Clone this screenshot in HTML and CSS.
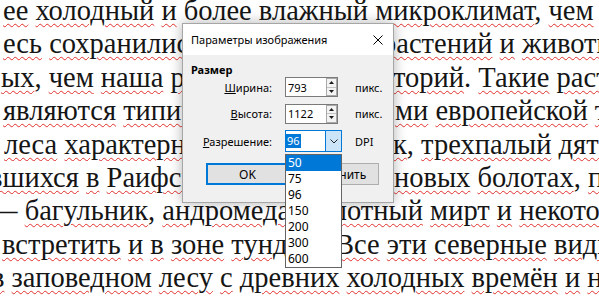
FILE: index.html
```html
<!DOCTYPE html>
<html lang="ru">
  <head>
    <meta charset="UTF-8" />
    <title>Параметры изображения</title>
    <link rel="stylesheet" href="styles.css">
  </head>
  <body>
    <main class="doc">
      <div class="ln l1"><u>ее</u> <u>холодный</u> <u>и</u> <u>более</u> <u>влажный</u> <u>микроклимат</u>, <u>чем</u></div>
      <div class="ln split l2"><span class="lft"><u>есь</u> <u>сохранились</u> <u>многие</u> <u>виды</u></span><span class="rgt"><u>растений</u> <u>и</u> <u>животных</u></span></div>
      <div class="ln split l3"><span class="lft"><u>ых</u>, <u>чем</u> <u>наша</u> <u>республика</u></span><span class="rgt"><u>торий</u>. <u>Такие</u> <u>растения</u></span></div>
      <div class="ln split l4"><span class="lft"><u>являются</u> <u>типичными</u></span><span class="rgt"><u>ми</u> <u>европейской</u> <u>тайги</u></span></div>
      <div class="ln split l5"><span class="lft"><u>леса</u> <u>характерны</u></span><span class="rgt"><u>к</u>, <u>трехпалый</u> <u>дятел</u></span></div>
      <div class="ln split l6"><span class="lft"><u>вшихся</u> <u>в</u> <u>Раифском</u></span><span class="rgt"><u>новых</u> <u>болотах</u>, <u>по</u></span></div>
      <div class="ln l7">— <u>багульник</u>, <u>андромеда</u>, <u>болотный</u> <u>мирт</u> <u>и</u> <u>некоторые</u></div>
      <div class="ln l8"><u>встретить</u> <u>и</u> <u>в</u> <u>зоне</u> <u>тундры</u>. <u>Все</u> <u>эти</u> <u>северные</u> <u>виды</u></div>
      <div class="ln l9"><u>в</u> <u>заповедном</u> <u>лесу</u> <u>с</u> <u>древних</u> <u>холодных</u> <u>времён</u> <u>и</u> <u>не</u></div>
    </main>

    <div class="dialog">
      <div class="titlebar">
        <span class="title">Параметры изображения</span>
        <svg class="close" width="10" height="10" viewBox="0 0 10 10">
          <path d="M0.5 0.5L9.5 9.5M9.5 0.5L0.5 9.5" stroke="#000" stroke-width="1" fill="none" />
        </svg>
      </div>
      <div class="body">
        <div class="group">Размер</div>
        <div class="grid">
          <label class="lbl"><span class="key">Ш</span>ирина:</label>
          <div class="spin">
            <span class="val">793</span>
            <div class="arrows">
              <span class="half"><svg width="5" height="3" viewBox="0 0 5 3"><path d="M0 3H5L2.5 0Z" /></svg></span>
              <span class="half"><svg width="5" height="3" viewBox="0 0 5 3"><path d="M0 0H5L2.5 3Z" /></svg></span>
            </div>
          </div>
          <span class="unit">пикс.</span>

          <label class="lbl"><span class="key">В</span>ысота:</label>
          <div class="spin">
            <span class="val">1122</span>
            <div class="arrows">
              <span class="half"><svg width="5" height="3" viewBox="0 0 5 3"><path d="M0 3H5L2.5 0Z" /></svg></span>
              <span class="half"><svg width="5" height="3" viewBox="0 0 5 3"><path d="M0 0H5L2.5 3Z" /></svg></span>
            </div>
          </div>
          <span class="unit">пикс.</span>

          <label class="lbl"><span class="key">Р</span>азрешение:</label>
          <div class="combo">
            <span class="sel">96</span>
            <span class="drop">
              <svg width="8" height="5" viewBox="0 0 8 5"><path d="M0.5 0.5L4 4L7.5 0.5" stroke="#222" stroke-width="1" fill="none" /></svg>
            </span>
            <ul class="list">
              <li class="hot">50</li>
              <li>75</li>
              <li>96</li>
              <li>150</li>
              <li>200</li>
              <li>300</li>
              <li>600</li>
            </ul>
          </div>
          <span class="unit">DPI</span>
        </div>
        <div class="buttons">
          <button class="btn default">OK</button>
          <button class="btn">Отменить</button>
        </div>
      </div>
    </div>
  </body>
</html>
```

FILE: styles.css
```css
* {
  box-sizing: border-box;
  margin: 0;
  padding: 0;
}

html,
body {
  width: 100%;
  height: 100%;
  overflow: hidden;
  background: #fff;
}

/* Document text behind the dialog */
.doc {
  font-family: "Liberation Serif", "Times New Roman", serif;
  font-size: 28.5px;
  line-height: 33.4px;
  color: #151515;
  margin-top: -6px;
}

.ln {
  white-space: nowrap;
}

/* spell check marks */
.ln u {
  text-decoration: underline wavy #e0302c;
  text-decoration-thickness: 1px;
  text-underline-offset: 3px;
}

.split {
  display: flex;
}

.split .lft {
  flex: 0 0 393px;
  overflow: hidden;
}

.l1 { text-indent: 3px; }
.l2 .lft { text-indent: 3px; }
.l2 .rgt { margin-left: -11px; }
.l3 .lft { text-indent: 1px; }
.l4 .lft { text-indent: 3px; }
.l4 .rgt { margin-left: 2px; }
.l5 .lft { text-indent: 4px; }
.l6 .lft { text-indent: -11px; }
.l6 .rgt { margin-left: 1px; }
.l7 { text-indent: -11px; }
.l8 { text-indent: 2px; }
.l9 { text-indent: -9px; }

/* Dialog */
.dialog {
  position: absolute;
  left: 182px;
  top: 23px;
  width: 212px;
  border: 1px solid #a6a6a6;
  background: #f0f0f0;
  box-shadow: 0 0 12px rgba(0, 0, 0, 0.3);
  font-family: "Noto Sans", "Open Sans", sans-serif;
  font-size: 11px;
  color: #000;
}

.titlebar {
  height: 31px;
  background: #fff;
  display: flex;
  align-items: center;
  justify-content: space-between;
  padding: 0 10px 0 8px;
}

.close {
  display: block;
}

.body {
  padding: 7px 14px 17px 8px;
}

.group {
  font-weight: bold;
  line-height: 15px;
}

.grid {
  display: grid;
  grid-template-columns: 81px 57px auto;
  grid-template-rows: 20px 21px 22px;
  column-gap: 13px;
  row-gap: 6px;
  align-items: center;
}

.lbl {
  text-align: right;
  white-space: nowrap;
}

.key {
  text-decoration: underline;
}

.spin {
  width: 53px;
  height: 20px;
  border: 1px solid #7a7a7a;
  background: #fff;
  display: flex;
  align-items: center;
  justify-content: space-between;
  padding-left: 2px;
}

.arrows {
  width: 11px;
  height: 18px;
  border: 1px solid #a9a9a9;
  background: #f3f3f3;
  display: flex;
  flex-direction: column;
}

.half {
  flex: 1;
  display: flex;
  align-items: center;
  justify-content: center;
}

.half + .half {
  border-top: 1px solid #c4c4c4;
}

.half svg {
  display: block;
  fill: #1a1a1a;
}

.combo {
  position: relative;
  width: 57px;
  height: 22px;
  border: 1px solid #0078d7;
  background: #fff;
  display: flex;
  align-items: center;
}

.sel {
  background: #0078d7;
  color: #fff;
  line-height: 14px;
  padding: 0 1px;
}

.drop {
  margin-left: auto;
  width: 16px;
  height: 100%;
  background: #cce4f7;
  border-left: 1px solid #0078d7;
  display: flex;
  align-items: center;
  justify-content: center;
}

.drop svg {
  display: block;
}

.list {
  position: absolute;
  left: -1px;
  top: 23px;
  width: 57px;
  list-style: none;
  background: #fff;
  border: 1px solid #646464;
  z-index: 2;
  font-size: 12px;
}

.list li {
  line-height: 16px;
  padding-left: 2px;
}

.list .hot {
  background: #0078d7;
  color: #fff;
}

.buttons {
  display: flex;
  justify-content: flex-end;
  gap: 7px;
  margin-top: 11px;
}

.btn {
  width: 83px;
  height: 22px;
  font-family: inherit;
  font-size: 12px;
  color: #000;
  background: #e1e1e1;
  border: 1px solid #adadad;
}

.btn.default {
  border: 2px solid #0078d7;
}
```
